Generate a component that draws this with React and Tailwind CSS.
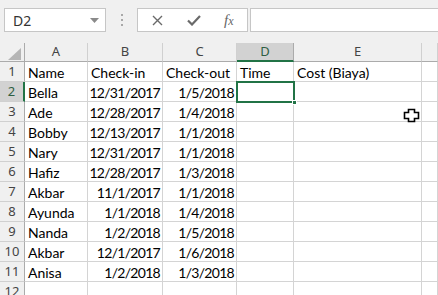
import React from "react";

const rows = [
  ["Name", "Check-in", "Check-out", "Time", "Cost (Biaya)"],
  ["Bella", "12/31/2017", "1/5/2018"],
  ["Ade", "12/28/2017", "1/4/2018"],
  ["Bobby", "12/13/2017", "1/1/2018"],
  ["Nary", "12/31/2017", "1/1/2018"],
  ["Hafiz", "12/28/2017", "1/3/2018"],
  ["Akbar", "11/1/2017", "1/1/2018"],
  ["Ayunda", "1/1/2018", "1/4/2018"],
  ["Nanda", "1/2/2018", "1/5/2018"],
  ["Akbar", "12/1/2017", "1/6/2018"],
  ["Anisa", "1/2/2018", "1/3/2018"],
  [],
];

const cols = ["A", "B", "C", "D", "E", ""];

const cellFont = { fontFamily: "Lato, 'Open Sans', sans-serif" };
const headFont = { fontFamily: "'Noto Sans', 'Open Sans', sans-serif" };

export default function App() {
  return (
    <div className="w-[438px] h-[295px] overflow-hidden bg-white relative select-none">
      {/* Toolbar */}
      <div className="h-[43px] bg-[#f0f0f0] flex items-start pt-[8px] pl-[4px]">
        <div className="w-[102px] h-[24px] bg-white border border-[#c6c6c6] flex items-center justify-between pl-[8px] pr-[6px]">
          <span className="text-[14px] text-[#333]" style={headFont}>D2</span>
          <svg width="9" height="5" viewBox="0 0 9 5"><path d="M0 0 L9 0 L4.5 5 Z" fill="#8a8a8a" /></svg>
        </div>
        <div className="w-[31px] h-[24px] flex flex-col items-center justify-center gap-[3px]">
          <div className="w-[2px] h-[2px] bg-[#a8a8a8]" />
          <div className="w-[2px] h-[2px] bg-[#a8a8a8]" />
          <div className="w-[2px] h-[2px] bg-[#a8a8a8]" />
        </div>
        <div className="w-[111px] h-[24px] bg-white border border-[#c6c6c6] flex items-center">
          <div className="w-[37px] flex justify-center pl-[3px]">
            <svg width="11" height="11" viewBox="0 0 11 11"><path d="M1 1 L10 10 M10 1 L1 10" stroke="#6a6a6a" strokeWidth="1.4" /></svg>
          </div>
          <div className="w-[37px] flex justify-center pl-[3px]">
            <svg width="14" height="11" viewBox="0 0 14 11"><path d="M1 5.5 L5 9.5 L13 1" stroke="#6a6a6a" strokeWidth="2.2" fill="none" /></svg>
          </div>
          <div className="w-[37px] flex justify-center">
            <span className="italic text-[15px] text-[#666] leading-none" style={{ fontFamily: "'Liberation Serif', serif" }}>f<span className="text-[12px]">x</span></span>
          </div>
        </div>
        <div className="ml-[2px] flex-1 h-[24px] bg-white border border-[#c6c6c6] border-r-0" />
      </div>

      {/* Grid */}
      <div className="grid grid-cols-[25px_63px_75px_74px_57px_128px_1fr]">
        {/* Column header row */}
        <div className="h-[19px] bg-[#f0f0f0] border-r border-b border-[#ababab] relative">
          <svg className="absolute left-[8px] top-[5px]" width="13" height="12" viewBox="0 0 13 12"><path d="M13 0 L13 12 L0 12 Z" fill="#b5b5b5" /></svg>
        </div>
        {cols.map((c, i) =>
          c === "D" ? (
            <div key={i} className="h-[19px] bg-[#d2d2d2] border-r border-[#ababab] border-b-2 border-b-[#217346] flex items-center justify-center text-[13px] text-[#2e5e42]" style={headFont}>
              {c}
            </div>
          ) : (
            <div key={i} className="h-[19px] bg-[#f0f0f0] border-r border-b border-r-[#d0d0d0] border-b-[#ababab] flex items-center justify-center text-[13px] text-[#444]" style={headFont}>
              {c}
            </div>
          )
        )}

        {rows.map((r, ri) => {
          const n = ri + 1;
          const sel = n === 2;
          return (
            <React.Fragment key={ri}>
              <div
                className={
                  sel
                    ? "h-[20px] bg-[#d2d2d2] border-b border-b-[#d0d0d0] border-r-2 border-r-[#217346] flex items-center justify-center text-[13px] text-[#2e5e42]"
                    : "h-[20px] bg-[#f0f0f0] border-b border-b-[#d0d0d0] border-r border-r-[#ababab] flex items-center justify-center text-[13px] text-[#444]"
                }
                style={headFont}
              >
                {n}
              </div>
              {[0, 1, 2, 3, 4, 5].map((ci) => {
                const v = r[ci];
                const isDate = n > 1 && (ci === 1 || ci === 2);
                return (
                  <div
                    key={ci}
                    className={
                      "h-[20px] border-r border-b border-[#d4d4d4] pt-[2px] leading-[18px] text-[14px] text-black whitespace-nowrap overflow-visible " +
                      (isDate ? "text-right pr-[2px] tracking-[-0.7px]" : "text-left pl-[3px]")
                    }
                    style={cellFont}
                  >
                    {v || ""}
                  </div>
                );
              })}
            </React.Fragment>
          );
        })}
      </div>

      {/* Selected cell D2 */}
      <div className="absolute left-[236px] top-[81px] w-[59px] h-[22px] border-2 border-[#217346]" />
      <div className="absolute left-[292px] top-[100px] w-[5px] h-[5px] bg-[#217346] border border-white" />

      {/* Cursor */}
      <svg className="absolute left-[403px] top-[108px]" width="17" height="15" viewBox="0 0 17 15">
        <path d="M5.5 1.5 H11.5 V4.5 H15.5 V10.5 H11.5 V13.5 H5.5 V10.5 H1.5 V4.5 H5.5 Z" fill="white" stroke="black" strokeWidth="1.6" />
      </svg>
    </div>
  );
}
